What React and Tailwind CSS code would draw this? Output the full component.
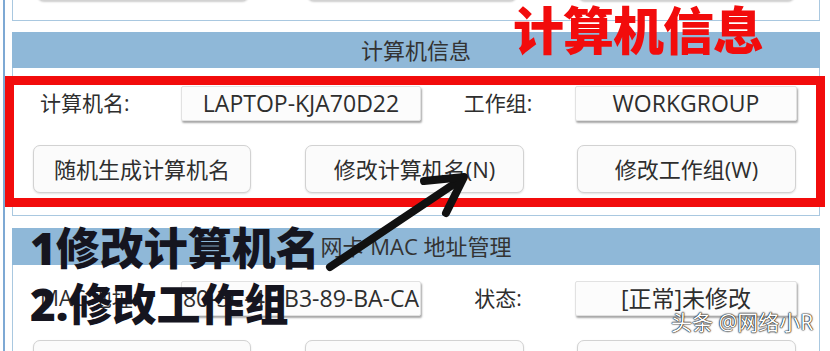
import React from 'react';

const font = { fontFamily: '"Open Sans", "Noto Sans CJK SC", sans-serif' };

const Field = ({ w, children }) => (
  <div
    className={`${w} h-[35px] flex items-center justify-center bg-[#fcfcfc] border border-[#e2e2e2] rounded-[2px] shadow-[1px_2px_2px_rgba(0,0,0,0.35)] text-[23px] text-[#2e2e2e]`}
  >
    {children}
  </div>
);

const Btn = ({ w, children }) => (
  <div
    className={`${w} h-[48px] flex items-center justify-center bg-[#fbfbfb] border border-[#d2d2d2] rounded-[7px] shadow-[0_1px_2px_rgba(0,0,0,0.12)] text-[22px] text-[#2e2e2e]`}
  >
    {children}
  </div>
);

const Header = ({ children, h }) => (
  <div className={`${h} flex items-center justify-center bg-[#8fb8d8] text-[22px] text-[#333]`}>
    {children}
  </div>
);

export default function App() {
  return (
    <div className="relative w-[830px] h-[351px] overflow-hidden bg-white" style={font}>
      <div className="flex h-full">
        <div className="w-[3px]" />
        <div className="w-[2px] h-full bg-[#7ea9d4]" />
        <div className="ml-[7px] w-[808px] flex flex-col">
          {/* previous group, cut off at the top */}
          <div className="-mt-[47px] border-x border-b border-[#a9c8e0] pb-[19px]">
            <div className="flex pl-[24px] h-[48px]">
              <div className="w-[212px] h-[48px] bg-[#fbfbfb] border border-[#d2d2d2] rounded-[7px] shadow-[0_1px_2px_rgba(0,0,0,0.2)]" />
              <div className="ml-[58px] w-[210px] h-[48px] bg-[#fbfbfb] border border-[#d2d2d2] rounded-[7px] shadow-[0_1px_2px_rgba(0,0,0,0.2)]" />
              <div className="ml-[61px] w-[217px] h-[48px] bg-[#fbfbfb] border border-[#d2d2d2] rounded-[7px] shadow-[0_1px_2px_rgba(0,0,0,0.2)]" />
            </div>
          </div>

          {/* 计算机信息 */}
          <div className="mt-[11px]">
            <Header h="h-[36px]">计算机信息</Header>
            <div className="border-x border-b border-[#a9c8e0] pt-[18px] pb-[22px]">
              <div className="flex items-center pl-[27px]">
                <div className="w-[141px] text-[21px] text-[#2e2e2e]">计算机名:</div>
                <Field w="w-[240px]">LAPTOP-KJA70D22</Field>
                <div className="w-[154px] text-center text-[21px] text-[#2e2e2e]">工作组:</div>
                <Field w="w-[222px]">WORKGROUP</Field>
              </div>
              <div className="flex pl-[20px] mt-[24px]">
                <Btn w="w-[218px]">随机生成计算机名</Btn>
                <div className="w-[54px]" />
                <Btn w="w-[219px]">修改计算机名(N)</Btn>
                <div className="w-[53px]" />
                <Btn w="w-[219px]">修改工作组(W)</Btn>
              </div>
            </div>
          </div>

          {/* 网卡 MAC 地址管理 */}
          <div className="mt-[12px]">
            <Header h="h-[37px]">网卡 MAC 地址管理</Header>
            <div className="border-x border-[#a9c8e0] pt-[16px] pb-[20px]">
              <div className="flex items-center pl-[27px]">
                <div className="w-[141px] text-[21px] text-[#2e2e2e]">MAC 地址:</div>
                <Field w="w-[240px]">80-3C-4F-B3-89-BA-CA</Field>
                <div className="w-[154px] text-center text-[21px] text-[#2e2e2e]">状态:</div>
                <Field w="w-[222px]">[正常]未修改</Field>
              </div>
              <div className="flex pl-[20px] mt-[24px]">
                <Btn w="w-[218px]" />
                <div className="w-[54px]" />
                <Btn w="w-[219px]" />
                <div className="w-[53px]" />
                <Btn w="w-[219px]" />
              </div>
            </div>
          </div>
        </div>
      </div>

      {/* annotations */}
      <div className="absolute left-[5px] top-[76px] w-[820px] h-[131px] border-[9px] border-[#f20c0c]" />

      <div className="absolute left-[513px] top-[5px] text-[51px] leading-none font-black text-[#f20c0c] tracking-[-1px]">
        计算机信息
      </div>

      <div className="absolute left-[30px] top-[226px] text-[44px] leading-none font-black text-[#15151f]">
        1修改计算机名
      </div>
      <div className="absolute left-[30px] top-[282px] text-[44px] leading-none font-black text-[#15151f]">
        2.修改工作组
      </div>

      <svg className="absolute left-0 top-0" width="830" height="351" viewBox="0 0 830 351">
        <g stroke="#111" strokeWidth="8" strokeLinecap="round" strokeLinejoin="round" fill="none">
          <line x1="330" y1="267" x2="460" y2="180" />
          <polyline points="424,181 464,177 446,213" />
        </g>
      </svg>

      <div className="absolute left-[671px] top-[312px] text-[21px] leading-none text-white [text-shadow:0_0_1px_#000,0_0_1px_#000,0_0_2px_#333]">
        头条 @网络小R
      </div>
    </div>
  );
}
